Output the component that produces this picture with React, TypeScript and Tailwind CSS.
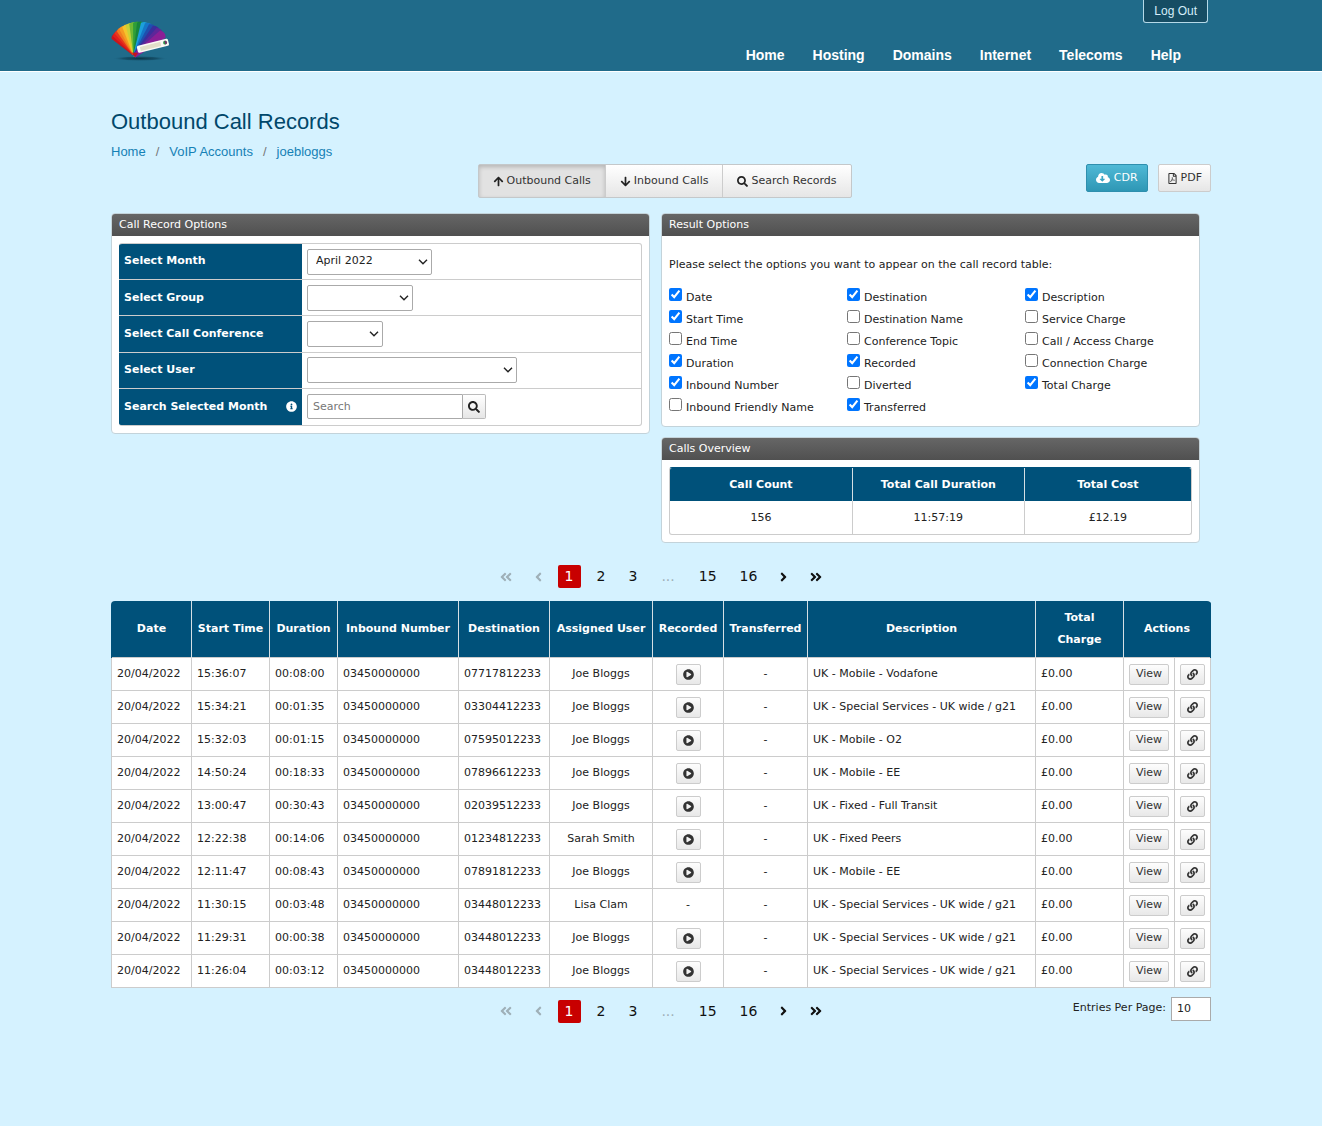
import React from "react";
import {
  FaAngleDoubleLeft,
  FaAngleDoubleRight,
  FaAngleLeft,
  FaAngleRight,
  FaArrowDown,
  FaArrowUp,
  FaCloudDownloadAlt,
  FaInfoCircle,
  FaLink,
  FaPlayCircle,
  FaRegFilePdf,
  FaSearch,
} from "react-icons/fa";

const navLinks = ["Home", "Hosting", "Domains", "Internet", "Telecoms", "Help"];

const resultOptions = [
  [
    { label: "Date", checked: true },
    { label: "Start Time", checked: true },
    { label: "End Time", checked: false },
    { label: "Duration", checked: true },
    { label: "Inbound Number", checked: true },
    { label: "Inbound Friendly Name", checked: false },
  ],
  [
    { label: "Destination", checked: true },
    { label: "Destination Name", checked: false },
    { label: "Conference Topic", checked: false },
    { label: "Recorded", checked: true },
    { label: "Diverted", checked: false },
    { label: "Transferred", checked: true },
  ],
  [
    { label: "Description", checked: true },
    { label: "Service Charge", checked: false },
    { label: "Call / Access Charge", checked: false },
    { label: "Connection Charge", checked: false },
    { label: "Total Charge", checked: true },
  ],
];

const calls = [
  { time: "15:36:07", duration: "00:08:00", destination: "07717812233", user: "Joe Bloggs", recorded: true, description: "UK - Mobile - Vodafone" },
  { time: "15:34:21", duration: "00:01:35", destination: "03304412233", user: "Joe Bloggs", recorded: true, description: "UK - Special Services - UK wide / g21" },
  { time: "15:32:03", duration: "00:01:15", destination: "07595012233", user: "Joe Bloggs", recorded: true, description: "UK - Mobile - O2" },
  { time: "14:50:24", duration: "00:18:33", destination: "07896612233", user: "Joe Bloggs", recorded: true, description: "UK - Mobile - EE" },
  { time: "13:00:47", duration: "00:30:43", destination: "02039512233", user: "Joe Bloggs", recorded: true, description: "UK - Fixed - Full Transit" },
  { time: "12:22:38", duration: "00:14:06", destination: "01234812233", user: "Sarah Smith", recorded: true, description: "UK - Fixed Peers" },
  { time: "12:11:47", duration: "00:08:43", destination: "07891812233", user: "Joe Bloggs", recorded: true, description: "UK - Mobile - EE" },
  { time: "11:30:15", duration: "00:03:48", destination: "03448012233", user: "Lisa Clam", recorded: false, description: "UK - Special Services - UK wide / g21" },
  { time: "11:29:31", duration: "00:00:38", destination: "03448012233", user: "Joe Bloggs", recorded: true, description: "UK - Special Services - UK wide / g21" },
  { time: "11:26:04", duration: "00:03:12", destination: "03448012233", user: "Joe Bloggs", recorded: true, description: "UK - Special Services - UK wide / g21" },
];

// Each swatch is a blade rotated round the pivot of the fan
const blades = [
  { angle: -48, color: "#c9151c" },
  { angle: -42, color: "#e01f1c" },
  { angle: -36, color: "#e8391c" },
  { angle: -30, color: "#f07a1f" },
  { angle: -24, color: "#f59a22" },
  { angle: -17, color: "#f3c52c" },
  { angle: -10, color: "#c9d136" },
  { angle: -3, color: "#6fb934" },
  { angle: 4, color: "#2f9e38" },
  { angle: 11, color: "#17863a" },
  { angle: 18, color: "#1c9fdc" },
  { angle: 25, color: "#1577c8" },
  { angle: 32, color: "#1f4fae" },
  { angle: 39, color: "#3a2f9c" },
  { angle: 46, color: "#5d2799" },
  { angle: 53, color: "#8a1f96" },
];

function Logo() {
  return (
    <svg width="60" height="46" viewBox="0 0 60 46" aria-label="Logo" role="img">
      <defs>
        <radialGradient id="shadow">
          <stop offset="0" stopColor="#062c3d" stopOpacity="0.85" />
          <stop offset="0.6" stopColor="#0b3b50" stopOpacity="0.55" />
          <stop offset="1" stopColor="#206b8a" stopOpacity="0" />
        </radialGradient>
      </defs>
      <ellipse cx="29" cy="40.500" rx="28" ry="2.600" fill="url(#shadow)" />
      {blades.map((blade) => (
        <path
          key={blade.angle}
          d="M-1.500 1 L-4 -30.500 Q0 -34 4 -30.500 L2 1 Z"
          fill={blade.color}
          transform={`translate(24 37) rotate(${blade.angle}) scale(${1.03 + blade.angle * 0.0021})`}
        />
      ))}
      <path d="M20.500 34.500 L24 39 L27 35 Z" fill="#c4161c" />
      <g transform="translate(27 34) rotate(-14)">
        <rect x="0" y="-6" width="32" height="7.200" rx="1.500" fill="#fbfaf6" />
        <rect x="3" y="-4.500" width="21" height="4.200" fill="#e2dfc9" />
        <circle cx="28.500" cy="-2.500" r="1.900" fill="#2f8f4a" />
        <path d="M28.500 -4.400 A1.900 1.900 0 0 1 28.500 -0.600 Z" fill="#7a2d6a" />
      </g>
    </svg>
  );
}

function Panel({ title, children }: { title: string; children: React.ReactNode }) {
  return (
    <section className="rounded border border-[#c3d3da] bg-white overflow-hidden">
      <h2 className="h-[22px] px-[7px] leading-[22px] text-white bg-gradient-to-b from-[#666] to-[#505050]">
        {title}
      </h2>
      <div className="p-[7px]">{children}</div>
    </section>
  );
}

function OptionRow({
  id,
  label,
  info,
  children,
}: {
  id: string;
  label: string;
  info?: boolean;
  children: React.ReactNode;
}) {
  return (
    <div className="flex border-b border-[#ccc] last:border-b-0">
      <div className="w-[183px] shrink-0 flex items-center justify-between px-[5px] bg-[#00517a] text-white font-bold">
        <label htmlFor={id}>{label}</label>
        {info && <FaInfoCircle size={11} />}
      </div>
      <div className="flex flex-1 items-center px-[5px]">{children}</div>
    </div>
  );
}

function Select({ id, width, children }: { id: string; width: string; children?: React.ReactNode }) {
  return (
    <div className={`relative ${width}`}>
      <select
        id={id}
        className="block w-full h-[26px] appearance-none rounded-xs border border-[#aaa] bg-white pl-2 pr-5 text-[#222]"
      >
        {children}
      </select>
      <svg
        className="absolute right-1 top-[9px] pointer-events-none"
        width="10"
        height="8"
        viewBox="0 0 10 8"
        fill="none"
        stroke="#222"
        strokeWidth="1.400"
      >
        <path d="M1 1.800 L5 5.800 L9 1.800" />
      </svg>
    </div>
  );
}

function SmallButton({ label, children }: { label?: string; children: React.ReactNode }) {
  return (
    <button
      aria-label={label}
      className="inline-flex items-center justify-center h-[21px] px-[6px] rounded-xs border border-[#ccc] bg-gradient-to-b from-[#fdfdfd] to-[#e8e8e8] text-[#333] align-middle"
    >
      {children}
    </button>
  );
}

function Pagination() {
  const item = "flex items-center h-[23px] px-[7px]";
  return (
    <nav className="flex items-center gap-[9px] text-[14px] text-[#111]">
      <button disabled aria-label="First page" className={`${item} text-[#9fb0b8]`}>
        <FaAngleDoubleLeft className="w-3" />
      </button>
      <button disabled aria-label="Previous page" className={`${item} text-[#9fb0b8]`}>
        <FaAngleLeft className="w-[7px]" />
      </button>
      <button className={`${item} rounded-xs bg-[#c80000] text-white`}>1</button>
      <button className={item}>2</button>
      <button className={item}>3</button>
      <span className="flex items-center h-[23px] px-2 text-[#9fb0b8]">...</span>
      <button className={item}>15</button>
      <button className={item}>16</button>
      <button aria-label="Next page" className={item}>
        <FaAngleRight className="w-[7px]" />
      </button>
      <button aria-label="Last page" className={item}>
        <FaAngleDoubleRight className="w-3" />
      </button>
    </nav>
  );
}

function CallTable() {
  const th = "border-x border-[#d5dfe4] px-1 font-bold leading-[22px] first:border-l-[#00517a] last:border-r-[#00517a]";
  const td = "border border-[#ccc] px-[5px] pt-[2px]";
  return (
    <div className="rounded-t overflow-hidden">
      <table className="w-full table-fixed border-collapse bg-white whitespace-nowrap">
        <colgroup>
          <col className="w-[80px]" />
          <col className="w-[78px]" />
          <col className="w-[68px]" />
          <col className="w-[121px]" />
          <col className="w-[91px]" />
          <col className="w-[103px]" />
          <col className="w-[71px]" />
          <col className="w-[84px]" />
          <col />
          <col className="w-[88px]" />
          <col className="w-[51px]" />
          <col className="w-[36px]" />
        </colgroup>
        <thead>
          <tr className="h-14 bg-[#00517a] text-white">
            <th className={th}>Date</th>
            <th className={th}>Start Time</th>
            <th className={th}>Duration</th>
            <th className={th}>Inbound Number</th>
            <th className={th}>Destination</th>
            <th className={th}>Assigned User</th>
            <th className={th}>Recorded</th>
            <th className={th}>Transferred</th>
            <th className={th}>Description</th>
            <th className={th}>
              Total
              <br />
              Charge
            </th>
            <th className={th} colSpan={2}>
              Actions
            </th>
          </tr>
        </thead>
        <tbody>
          {calls.map((call) => (
            <tr key={call.time} className="h-[33px]">
              <td className={td}>20/04/2022</td>
              <td className={td}>{call.time}</td>
              <td className={td}>{call.duration}</td>
              <td className={td}>03450000000</td>
              <td className={td}>{call.destination}</td>
              <td className={`${td} text-center`}>{call.user}</td>
              <td className={`${td} text-center`}>
                {call.recorded ? (
                  <SmallButton label="Play recording">
                    <FaPlayCircle size={11} />
                  </SmallButton>
                ) : (
                  "-"
                )}
              </td>
              <td className={`${td} text-center`}>-</td>
              <td className={td}>{call.description}</td>
              <td className={td}>£0.00</td>
              <td className={td}>
                <SmallButton>View</SmallButton>
              </td>
              <td className={td}>
                <SmallButton label="Copy link">
                  <FaLink size={11} />
                </SmallButton>
              </td>
            </tr>
          ))}
        </tbody>
      </table>
    </div>
  );
}

function App() {
  const tab = "flex items-center gap-[3px] h-8 px-[14px] text-[#333]";
  return (
    <div className="min-h-screen bg-[#d5f2ff] text-[11px] text-[#222] font-['DejaVu_Sans',Verdana,sans-serif]">
      <header className="border-b border-white bg-[#206b8a] font-['Liberation_Sans',Arial,sans-serif]">
        <div className="max-w-[1100px] mx-auto h-[71px] flex justify-between">
          <a href="#" className="pt-[18px]">
            <Logo />
          </a>
          <div className="flex flex-col items-end justify-between">
            <a
              href="#"
              className="mr-[3px] h-[23px] px-[10px] text-[12px] leading-[22px] text-[#d5eefa] bg-[#164d64] border border-t-0 border-[#b5d9e8] rounded-b-[3px]"
            >
              Log Out
            </a>
            <nav className="flex gap-7 pr-[30px] pb-[7px] text-[14px] leading-[18px] font-bold text-white">
              {navLinks.map((link) => (
                <a key={link} href="#">
                  {link}
                </a>
              ))}
            </nav>
          </div>
        </div>
      </header>

      <main className="max-w-[1100px] mx-auto pt-9">
        <div className="font-['Liberation_Sans',Arial,sans-serif]">
          <h1 className="text-[22px] leading-7 text-[#00486b]">Outbound Call Records</h1>
          <nav className="flex gap-[10px] pt-[7px] text-[13px] leading-[18px] text-[#1581b5]">
            <a href="#">Home</a>
            <span className="text-[#777]">/</span>
            <a href="#">VoIP Accounts</a>
            <span className="text-[#777]">/</span>
            <a href="#">joebloggs</a>
          </nav>
        </div>

        <div className="grid grid-cols-[1fr_auto_1fr] items-start pt-[3px]">
          <div className="col-start-2 flex ml-[7px] rounded-xs border border-[#c4c8ca] bg-gradient-to-b from-white to-[#e6e6e6]">
            <button className={`${tab} bg-[#e2e2e2] shadow-[inset_0_2px_4px_rgba(0,0,0,0.2)]`}>
              <FaArrowUp size={11} className="text-[#222]" />
              Outbound Calls
            </button>
            <button className={`${tab} border-x border-[#ccc]`}>
              <FaArrowDown size={11} className="text-[#222]" />
              Inbound Calls
            </button>
            <button className={tab}>
              <FaSearch size={11} className="text-[#222]" />
              Search Records
            </button>
          </div>
          <div className="flex justify-end gap-[10px]">
            <button className="flex items-center gap-1 h-7 px-[9px] rounded-xs border border-[#2f8fae] bg-gradient-to-b from-[#4fb9d6] to-[#2e97b5] text-white">
              <FaCloudDownloadAlt size={14} />
              CDR
            </button>
            <button className="flex items-center gap-[3px] h-7 px-2 rounded-xs border border-[#ccc] bg-gradient-to-b from-white to-[#e6e6e6] text-[#333]">
              <FaRegFilePdf size={11} />
              PDF
            </button>
          </div>
        </div>

        <div className="grid grid-cols-2 items-start gap-[11px] pt-[15px] pr-[11px]">
          <Panel title="Call Record Options">
            <div className="grid auto-rows-fr min-h-[183px] rounded-[3px] border border-l-0 border-[#ccc] overflow-hidden">
              <OptionRow id="month" label="Select Month">
                <Select id="month" width="w-[125px]">
                  <option>April 2022</option>
                </Select>
              </OptionRow>
              <OptionRow id="group" label="Select Group">
                <Select id="group" width="w-[106px]" />
              </OptionRow>
              <OptionRow id="conference" label="Select Call Conference">
                <Select id="conference" width="w-[76px]" />
              </OptionRow>
              <OptionRow id="user" label="Select User">
                <Select id="user" width="w-[210px]" />
              </OptionRow>
              <OptionRow id="search" label="Search Selected Month" info>
                <input
                  id="search"
                  placeholder="Search"
                  className="h-[25px] w-[156px] px-[5px] rounded-l-xs border border-[#aaa] bg-white placeholder:text-[#777]"
                />
                <button
                  aria-label="Search"
                  className="flex items-center justify-center h-[25px] w-[23px] rounded-r-xs border border-l-0 border-[#bbb] bg-gradient-to-b from-white to-[#e6e6e6] text-[#222]"
                >
                  <FaSearch size={12} />
                </button>
              </OptionRow>
            </div>
          </Panel>

          <div className="flex flex-col gap-[10px]">
            <Panel title="Result Options">
              <p className="pt-[14px] leading-4">
                Please select the options you want to appear on the call record table:
              </p>
              <div className="grid grid-cols-[178px_178px_1fr] pt-[14px]">
                {resultOptions.map((column, index) => (
                  <div key={index}>
                    {column.map((option) => (
                      <label key={option.label} className="flex items-start gap-1 h-[22px]">
                        <input type="checkbox" defaultChecked={option.checked} className="size-[13px] mt-px" />
                        <span className="leading-[22px]">{option.label}</span>
                      </label>
                    ))}
                  </div>
                ))}
              </div>
            </Panel>

            <Panel title="Calls Overview">
              <div className="rounded-[3px] border border-[#ccc] border-t-[#00517a] overflow-hidden">
                <table className="w-full table-fixed text-center">
                  <thead>
                    <tr className="h-[33px] bg-[#00517a] text-white">
                      <th className="w-[35%] pt-[2px]">Call Count</th>
                      <th className="w-[33%] pt-[2px] border-x border-[#d5dfe4]">Total Call Duration</th>
                      <th className="pt-[2px]">Total Cost</th>
                    </tr>
                  </thead>
                  <tbody>
                    <tr className="h-[33px]">
                      <td className="pt-[2px]">156</td>
                      <td className="pt-[2px] border-x border-[#ccc]">11:57:19</td>
                      <td className="pt-[2px]">£12.19</td>
                    </tr>
                  </tbody>
                </table>
              </div>
            </Panel>
          </div>
        </div>

        <div className="flex justify-center pt-[22px] pb-[13px]">
          <Pagination />
        </div>

        <CallTable />

        <div className="grid grid-cols-[1fr_auto_1fr] items-start pt-[9px] pb-10">
          <div className="col-start-2 pt-[3px]">
            <Pagination />
          </div>
          <div className="flex items-center justify-end gap-[5px]">
            <label htmlFor="entries">Entries Per Page:</label>
            <input
              id="entries"
              defaultValue="10"
              className="h-6 w-10 px-[5px] border border-[#aaa] bg-white"
            />
          </div>
        </div>
      </main>
    </div>
  );
}

export default App;
